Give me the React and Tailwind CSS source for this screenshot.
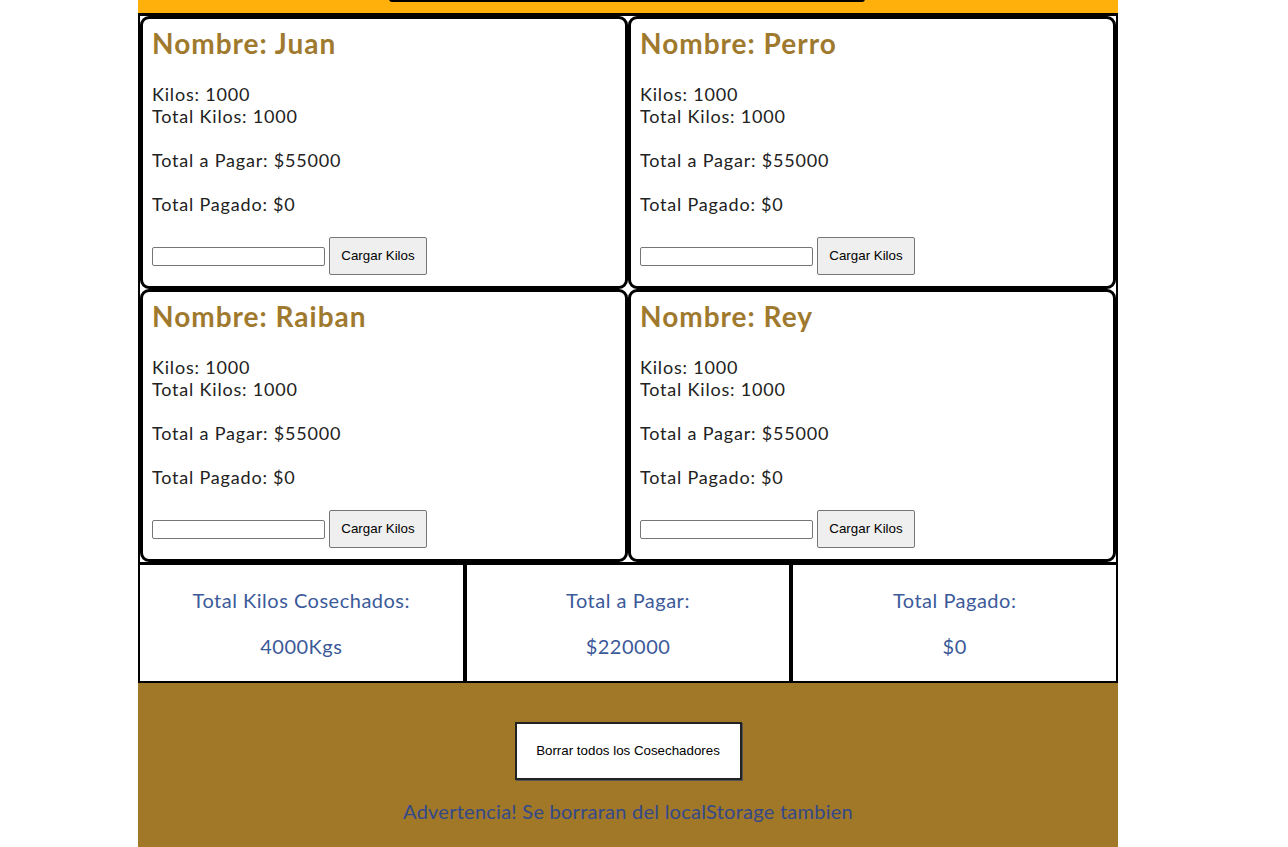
import React from 'react';

const cosechadores = [
    { nombre: 'Juan', kilos: 1000 },
    { nombre: 'Perro', kilos: 1000 },
    { nombre: 'Raiban', kilos: 1000 },
    { nombre: 'Rey', kilos: 1000 },
];

const Card = ({ nombre, kilos }) => (
    <div className="border-[3px] border-black rounded-[9px] bg-white px-[9px] pt-[7px] pb-[10px] h-[273px]">
        <h2 className="text-[28px] leading-[34px] font-bold text-[#9f7a2e] tracking-[1px]">Nombre: {nombre}</h2>
        <div className="mt-[23px] text-[18px] leading-[22px] text-[#222] tracking-[0.8px]">
            <p>Kilos: {kilos}</p>
            <p>Total Kilos: {kilos}</p>
            <p className="mt-[22px]">Total a Pagar: $55000</p>
            <p className="mt-[22px]">Total Pagado: $0</p>
        </div>
        <div className="mt-[22px] flex items-center gap-[4px]">
            <input type="text" className="w-[173px] h-[19px] border border-[#767676] rounded-[2px] bg-white" />
            <button className="h-[38px] w-[98px] bg-[#efefef] border border-[#767676] rounded-[2px] text-[13.33px] text-black font-['Liberation_Sans',Arial,sans-serif]">
                Cargar Kilos
            </button>
        </div>
    </div>
);

const Stat = ({ label, value }) => (
    <div className="border-2 border-black h-[120px] flex flex-col items-center pt-[23px] text-[20px] leading-[24px] text-[#3c5a99] tracking-[0.5px]">
        <p>{label}</p>
        <p className="mt-[22px]">{value}</p>
    </div>
);

export default function App() {
    return (
        <div className="min-h-screen bg-white font-['Lato','Noto_Sans',sans-serif]">
            <div className="ml-[138px] w-[980px]">
                <div className="h-[13px] bg-[#ffb00b] flex justify-center">
                    <div className="w-[476px] h-[3px] -mt-[1px] ml-[-2px] border-2 border-t-0 border-black rounded-b-[6px]" />
                </div>
                <div className="border-t-[3px] border-x-2 border-black grid grid-cols-2">
                    {cosechadores.map(c => <Card key={c.nombre} {...c} />)}
                </div>
                <div className="grid grid-cols-3 border-t-[1px] border-black">
                    <Stat label="Total Kilos Cosechados:" value="4000Kgs" />
                    <Stat label="Total a Pagar:" value="$220000" />
                    <Stat label="Total Pagado:" value="$0" />
                </div>
                <div className="bg-[#a07828] h-[164px] flex flex-col items-center pt-[39px]">
                    <button className="w-[227px] h-[58px] bg-white border-2 border-[#222] text-[13.33px] text-black font-['Liberation_Sans',Arial,sans-serif] shadow-[1px_1px_0_#555]">
                        Borrar todos los Cosechadores
                    </button>
                    <p className="mt-[19px] text-[20px] leading-[24px] text-[#34498a] tracking-[0.25px]">Advertencia! Se borraran del localStorage tambien</p>
                </div>
            </div>
        </div>
    );
}
